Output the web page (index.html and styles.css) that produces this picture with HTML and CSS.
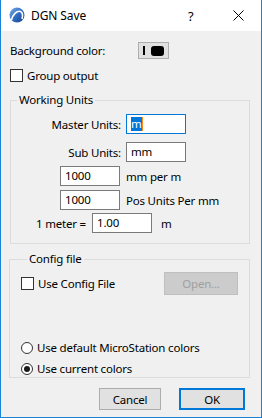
FILE: index.html
```html
<!DOCTYPE html>
<html>
<head>
<meta charset="utf-8">
<link rel="stylesheet" href="styles.css">
</head>
<body>
<div class="window">
  <div class="titlebar">
    <svg class="appicon" width="16" height="16" viewBox="0 0 16 16">
      <defs>
        <linearGradient id="g" x1="0" y1="0" x2="1" y2="1">
          <stop offset="0" stop-color="#7fb0e8"/>
          <stop offset="0.5" stop-color="#2f6fc4"/>
          <stop offset="1" stop-color="#163f8c"/>
        </linearGradient>
      </defs>
      <circle cx="8" cy="8" r="7.5" fill="url(#g)"/>
      <path d="M2.5 13 C4 7 8 3.5 11.5 4.5 C13.5 5.5 13.8 9 13 12" fill="none" stroke="#fff" stroke-width="1.6"/>
    </svg>
    <span class="title">DGN Save</span>
    <span class="help">?</span>
    <svg class="close" width="11" height="11" viewBox="0 0 11 11">
      <path d="M0.5 0.5 L10.5 10.5 M10.5 0.5 L0.5 10.5" stroke="#000" stroke-width="1"/>
    </svg>
  </div>
  <div class="body">
    <div class="row bgrow">
      <span class="lbl">Background color:</span>
      <span class="swatch"><span class="bar"></span><span class="blk"></span></span>
    </div>
    <div class="row chkrow">
      <span class="checkbox"></span><span>Group output</span>
    </div>
    <fieldset class="group wu">
      <legend>Working Units</legend>
      <div class="row r-a">
        <span class="rlabel">Master Units:</span>
        <span class="input focus"><span class="sel">m</span><span class="caret"></span></span>
      </div>
      <div class="row r-b">
        <span class="rlabel">Sub Units:</span>
        <span class="input">mm</span>
      </div>
      <div class="row r-c">
        <span class="input">1000</span>
        <span class="after">mm per m</span>
      </div>
      <div class="row r-d">
        <span class="input">1000</span>
        <span class="after">Pos Units Per mm</span>
      </div>
      <div class="row r-e">
        <span class="meter">1 meter =</span>
        <span class="input">1.00</span>
        <span class="unit">m</span>
      </div>
    </fieldset>
    <fieldset class="group cf">
      <legend>Config file</legend>
      <div class="row cfrow">
        <span class="chkwrap"><span class="checkbox"></span><span>Use Config File</span></span>
        <span class="btn disabled">Open...</span>
      </div>
      <div class="row radio r1"><span class="radiob"></span><span>Use default MicroStation colors</span></div>
      <div class="row radio r2"><span class="radiob checked"></span><span>Use current colors</span></div>
    </fieldset>
    <div class="row buttons">
      <span class="btn cancel">Cancel</span>
      <span class="btn ok">OK</span>
    </div>
  </div>
</div>
</body>
</html>
```

FILE: styles.css
```css
* { box-sizing: border-box; }
html, body { margin: 0; padding: 0; }
body {
  width: 262px;
  height: 418px;
  font-family: "Noto Sans", "Open Sans", sans-serif;
  font-size: 11.5px;
  letter-spacing: -0.2px;
  color: #000;
  background: #f0f0f0;
}
.window {
  width: 262px;
  height: 418px;
  border-left: 1px solid #1883d7;
  border-right: 1px solid #1883d7;
  border-bottom: 1px solid #1883d7;
  background: #f0f0f0;
  display: flex;
  flex-direction: column;
}
.titlebar {
  height: 31px;
  background: #fff;
  display: flex;
  align-items: center;
  flex-shrink: 0;
}
.appicon { margin-left: 8px; margin-top: -1px; }
.title { margin-left: 6px; font-size: 12px; line-height: 16px; letter-spacing: -0.1px; }
.help { margin-left: auto; width: 8px; font-size: 13px; line-height: 16px; margin-right: 37px; }
.close { margin-right: 17px; }

.body { padding: 0 11px 0 8px; display: flex; flex-direction: column; }
.row { display: flex; align-items: center; }
.lbl { line-height: 16px; }
.bgrow { margin-top: 11px; height: 17px; margin-left: 1px; }
.swatch {
  margin-left: auto;
  margin-right: 81px;
  width: 31px;
  height: 17px;
  background: #e1e1e1;
  border: 1px solid #adadad;
  display: flex;
  align-items: center;
  padding-left: 4px;
}
.swatch .bar { width: 2px; height: 9px; background: #000; }
.swatch .blk { width: 13px; height: 10px; background: #000; border-radius: 3px; margin-left: 6px; }
.chkrow { margin-top: 9px; height: 15px; margin-left: 1px; }
.checkbox {
  width: 13px; height: 13px;
  border: 1px solid #333;
  background: #fff;
  margin-right: 4px;
  flex-shrink: 0;
}
.group {
  margin: 0;
  padding: 0;
  border: 1px solid #dcdcdc;
  min-width: 0;
}
.group legend {
  margin-left: 6px;
  padding: 0 2px;
  line-height: 16px;
  height: 16px;
}
.wu { margin-top: 9px; margin-left: 1px; padding-bottom: 10px; }
.input {
  width: 60px; height: 20px;
  background: #fff;
  border: 1px solid #7a7a7a;
  padding-left: 4px;
  line-height: 18px;
  display: flex; align-items: center;
  flex-shrink: 0;
}
.input.focus { border-color: #0078d7; }
.input .sel { background: #0078d7; color: #fff; line-height: 14px; }
.input .caret { width: 1px; height: 14px; background: #ff8a1c; }
.rlabel { width: 110px; text-align: right; margin-right: 5px; }
.r-a { margin-top: 6px; }
.r-b { margin-top: 8px; }
.r-c { margin-top: 4px; padding-left: 49px; }
.r-d { margin-top: 4px; padding-left: 49px; }
.r-c .after, .r-d .after { margin-left: 6px; }
.r-e { margin-top: 3px; padding-left: 25px; }
.meter { width: 56px; }
.unit { margin-left: 9px; }

.cf { margin-top: 7px; padding: 0 11px 1px 11px; }
.cfrow { margin-top: 5px; height: 23px; justify-content: space-between; }
.chkwrap { display: flex; align-items: center; }
.btn {
  display: flex; align-items: center; justify-content: center;
  background: #e1e1e1;
  border: 1px solid #adadad;
  height: 22px;
}
.btn.disabled { width: 74px; height: 23px; background: #cccccc; border-color: #bfbfbf; color: #a0a0a0; }
.radio { height: 15px; }
.r1 { margin-top: 45px; }
.r2 { margin-top: 6px; }
.radiob {
  width: 12px; height: 12px; border-radius: 50%;
  border: 1px solid #333; background: #fff;
  margin-right: 4px; flex-shrink: 0;
  display: flex; align-items: center; justify-content: center;
}
.radiob.checked::after { content: ""; width: 6px; height: 6px; border-radius: 50%; background: #1a1a1a; }
.buttons { margin-top: 10px; justify-content: flex-end; gap: 18px; padding-right: 5px; }
.cancel { width: 62px; }
.ok { width: 66px; border: 2px solid #0078d7; }
```
